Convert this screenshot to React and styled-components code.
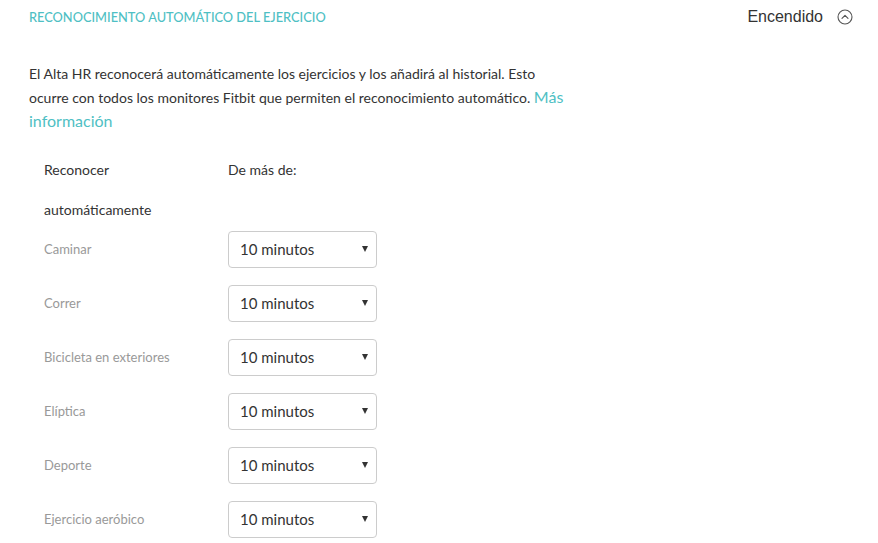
import React from 'react';
import styled, { createGlobalStyle } from 'styled-components';

const GlobalStyle = createGlobalStyle`
  body {
    margin: 0;
    background: #fff;
    font-family: Lato, "Liberation Sans", sans-serif;
    color: #333;
  }
`;

const activities = [
  'Caminar',
  'Correr',
  'Bicicleta en exteriores',
  'Elíptica',
  'Deporte',
  'Ejercicio aeróbico',
];

function ChevronCircle() {
  return (
    <svg width="16" height="16" viewBox="0 0 16 16" fill="none">
      <circle cx="8" cy="8" r="7" stroke="#555" strokeWidth="1.1" />
      <path d="M5 9.3 L8 6.3 L11 9.3" stroke="#555" strokeWidth="1.1" strokeLinecap="round" strokeLinejoin="round" />
    </svg>
  );
}

function Dropdown({ value }) {
  return (
    <SelectBox>
      <span>{value}</span>
      <Arrow />
    </SelectBox>
  );
}

export default function App() {
  return (
    <Page>
      <GlobalStyle />
      <HeaderBar>
        <Title>Reconocimiento automático del ejercicio</Title>
        <Status>
          Encendido
          <ChevronCircle />
        </Status>
      </HeaderBar>

      <Description>
        El Alta HR reconocerá automáticamente los ejercicios y los añadirá al historial. Esto
        ocurre con todos los monitores Fitbit que permiten el reconocimiento automático.{' '}
        <MoreLink href="#">Más información</MoreLink>
      </Description>

      <Table>
        <HeadCell>Reconocer<br />automáticamente</HeadCell>
        <HeadCell>De más de:</HeadCell>
        {activities.map((name) => (
          <React.Fragment key={name}>
            <RowLabel>{name}</RowLabel>
            <Dropdown value="10 minutos" />
          </React.Fragment>
        ))}
      </Table>
    </Page>
  );
}

const Page = styled.div`
  width: 878px;
  height: 543px;
  overflow: hidden;
  padding: 0 0 0 29px;
  box-sizing: border-box;
`;

const HeaderBar = styled.div`
  display: flex;
  align-items: center;
  justify-content: space-between;
  height: 34px;
  padding-right: 25px;
`;

const Title = styled.h3`
  margin: 0;
  font-size: 12.8px;
  font-weight: 500;
  text-transform: uppercase;
  color: #4fbfc4;
`;

const Status = styled.div`
  display: flex;
  align-items: center;
  gap: 14px;
  font-family: "Liberation Sans", Arial, sans-serif;
  font-size: 16px;
  color: #333;
`;

const Description = styled.p`
  margin: 28px 0 0;
  width: 540px;
  font-size: 14px;
  line-height: 24px;
  color: #333;
`;

const MoreLink = styled.a`
  color: #4fbfc4;
  font-size: 16px;
  line-height: 1;
  text-decoration: none;
`;

const Table = styled.div`
  display: grid;
  grid-template-columns: 184px 149px;
  grid-template-rows: 72px repeat(6, 54px);
  margin: 16px 0 0 15px;
  align-items: center;
`;

const HeadCell = styled.div`
  align-self: start;
  font-size: 14px;
  line-height: 40px;
  color: #333;
  white-space: nowrap;
`;

const RowLabel = styled.div`
  font-size: 13px;
  color: #999;
`;

const SelectBox = styled.div`
  height: 37px;
  box-sizing: border-box;
  border: 1px solid #ccc;
  border-radius: 4px;
  display: flex;
  align-items: center;
  justify-content: space-between;
  padding: 0 8px 0 11px;
  font-size: 15px;
  color: #333;
`;

const Arrow = styled.span`
  width: 0;
  height: 0;
  border-left: 3.5px solid transparent;
  border-right: 3.5px solid transparent;
  border-top: 6px solid #333;
`;
